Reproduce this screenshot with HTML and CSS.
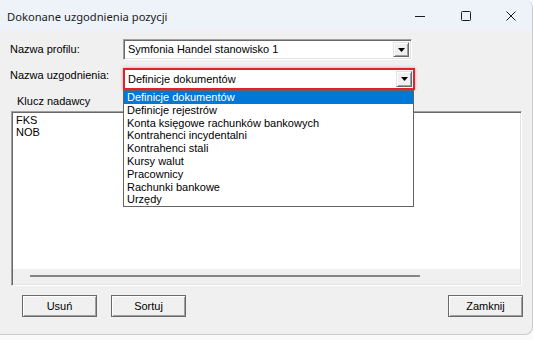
FILE: index.html
```html
<!DOCTYPE html>
<html lang="pl">
<head>
  <meta charset="UTF-8" />
  <title>Dokonane uzgodnienia pozycji</title>
  <link rel="stylesheet" href="styles.css">
</head>
<body>

  <div class="window">
    <div class="titlebar">
      <span class="title">Dokonane uzgodnienia pozycji</span>
      <div class="controls">
        <span class="ctl">
          <svg width="10" height="10" viewBox="0 0 10 10"><line x1="0" y1="5.5" x2="10" y2="5.5" stroke="#1b1b1b" stroke-width="1"/></svg>
        </span>
        <span class="ctl">
          <svg width="10" height="10" viewBox="0 0 10 10"><rect x="0.5" y="0.5" width="9" height="9" rx="1" fill="none" stroke="#1b1b1b" stroke-width="1"/></svg>
        </span>
        <span class="ctl ctl-close">
          <svg width="10" height="10" viewBox="0 0 10 10"><path d="M0.5 0.5L9.5 9.5M9.5 0.5L0.5 9.5" stroke="#1b1b1b" stroke-width="1"/></svg>
        </span>
      </div>
    </div>

    <div class="content">
      <div class="field">
        <label class="field-label">Nazwa profilu:</label>
        <div class="combo">
          <span class="combo-text">Symfonia Handel stanowisko 1</span>
          <span class="combo-btn"><svg width="7" height="4" viewBox="0 0 7 4"><polygon points="0,0 7,0 3.5,4" fill="#000"/></svg></span>
        </div>
      </div>

      <div class="field field-active">
        <label class="field-label">Nazwa uzgodnienia:</label>
        <div class="combo combo-focus">
          <span class="combo-text">Definicje dokumentów</span>
          <span class="combo-btn"><svg width="7" height="4" viewBox="0 0 7 4"><polygon points="0,0 7,0 3.5,4" fill="#000"/></svg></span>
        </div>
      </div>

      <div class="list-caption">Klucz nadawcy</div>
      <div class="listbox">
        <div class="list-items">
          <div class="list-item">FKS</div>
          <div class="list-item">NOB</div>
        </div>
        <div class="hscroll"><div class="hscroll-thumb"></div></div>
      </div>

      <div class="buttons">
        <button class="btn">Usuń</button>
        <button class="btn">Sortuj</button>
        <button class="btn btn-right">Zamknij</button>
      </div>
    </div>

    <!-- open dropdown of the second combo -->
    <ul class="dropdown">
      <li class="selected">Definicje dokumentów</li>
      <li>Definicje rejestrów</li>
      <li>Konta księgowe rachunków bankowych</li>
      <li>Kontrahenci incydentalni</li>
      <li>Kontrahenci stali</li>
      <li>Kursy walut</li>
      <li>Pracownicy</li>
      <li>Rachunki bankowe</li>
      <li>Urzędy</li>
    </ul>
  </div>

</body>
</html>
```

FILE: styles.css
```css
body {
  margin: 0;
  background: #fafafa;
}
.window {
  position: relative;
  width: 533px;
  height: 335px;
  box-sizing: border-box;
  background: #f0f0f0;
  border-right: 1px solid #c9c9c9;
  border-bottom: 1px solid #c9c9c9;
  border-radius: 0 8px 8px 0;
  overflow: hidden;
  font-family: 'Liberation Sans', Arial, sans-serif;
  font-size: 11px;
  color: #000;
}
.titlebar {
  display: flex;
  align-items: center;
  height: 31px;
  background: #eef3f9;
  padding-left: 7px;
}
.title {
  flex: 1;
  font-family: 'Noto Sans', sans-serif;
  font-size: 11.2px;
  color: #1b1b1b;
  padding-top: 2px;
}
.controls {
  display: flex;
  height: 31px;
  padding-top: 1px;
  box-sizing: border-box;
}
.ctl {
  width: 46px;
  display: flex;
  align-items: center;
  justify-content: center;
}
.ctl-close {
  width: 43px;
}
.ctl svg {
  display: block;
}
.content {
  padding-top: 8px;
}
.field {
  display: flex;
  align-items: flex-start;
  height: 21px;
  margin-bottom: 8px;
}
.field-active {
  height: 22px;
  margin-bottom: 0;
}
.field-label {
  width: 113px;
  padding-left: 10px;
  padding-top: 4px;
  line-height: 13px;
}
.field-active .field-label {
  padding-top: 1px;
}
.combo {
  width: 289px;
  height: 21px;
  box-sizing: border-box;
  display: flex;
  align-items: center;
  background: #fff;
  border: 1px solid;
  border-color: #a0a0a0 #fff #fff #a0a0a0;
  box-shadow: inset 1px 1px #696969, inset -1px -1px #e3e3e3;
  padding: 2px 2px 2px 4px;
}
.combo-focus {
  width: 292px;
  height: 22px;
  border: 2px solid #e3202c;
  box-shadow: 0 0 3px rgba(230, 30, 40, 0.45);
  padding: 1px 1px 1px 3px;
}
.combo-text {
  flex: 1;
  line-height: 13px;
}
.combo-btn {
  width: 16px;
  height: 100%;
  box-sizing: border-box;
  display: flex;
  align-items: center;
  justify-content: center;
  background: #f0f0f0;
  border: 1px solid;
  border-color: #e3e3e3 #696969 #696969 #e3e3e3;
  box-shadow: inset 1px 1px #fff, inset -1px -1px #a0a0a0;
}
.combo-btn svg {
  display: block;
  margin-left: 1px;
}
.list-caption {
  height: 21px;
  box-sizing: border-box;
  padding: 5px 0 0 17px;
  line-height: 13px;
}
.listbox {
  margin-left: 11px;
  width: 511px;
  height: 175px;
  box-sizing: border-box;
  display: flex;
  flex-direction: column;
  background: #fff;
  border: 1px solid;
  border-color: #a0a0a0 #fff #fff #a0a0a0;
  box-shadow: inset 1px 1px #696969, inset -1px -1px #e3e3e3;
  padding: 1px;
}
.list-items {
  flex: 1;
  padding: 1px 0 0 3px;
}
.list-item {
  line-height: 12px;
}
.hscroll {
  height: 15px;
  background: #f0f0f0;
  padding: 6px 0 0 17px;
  box-sizing: border-box;
}
.hscroll-thumb {
  width: 390px;
  height: 2px;
  background: #858585;
}
.buttons {
  display: flex;
  gap: 14px;
  margin-top: 9px;
  padding-left: 22px;
}
.btn {
  width: 75px;
  height: 22px;
  padding: 0;
  background: #f0f0f0;
  border: 1px solid #696969;
  box-shadow: inset 1px 1px #fff, inset -1px -1px #a0a0a0;
  font-family: 'Liberation Sans', Arial, sans-serif;
  font-size: 11px;
  color: #000;
}
.btn-right {
  margin-left: auto;
  margin-right: 9px;
}
.dropdown {
  position: absolute;
  left: 123px;
  top: 90px;
  width: 291px;
  margin: 0;
  padding: 0;
  list-style: none;
  box-sizing: border-box;
  background: #fff;
  border: 1px solid #646464;
}
.dropdown li {
  height: 12.8px;
  line-height: 13px;
  padding-left: 3px;
  white-space: nowrap;
}
.dropdown li.selected {
  background: #0078d7;
  color: #fff;
}
```
